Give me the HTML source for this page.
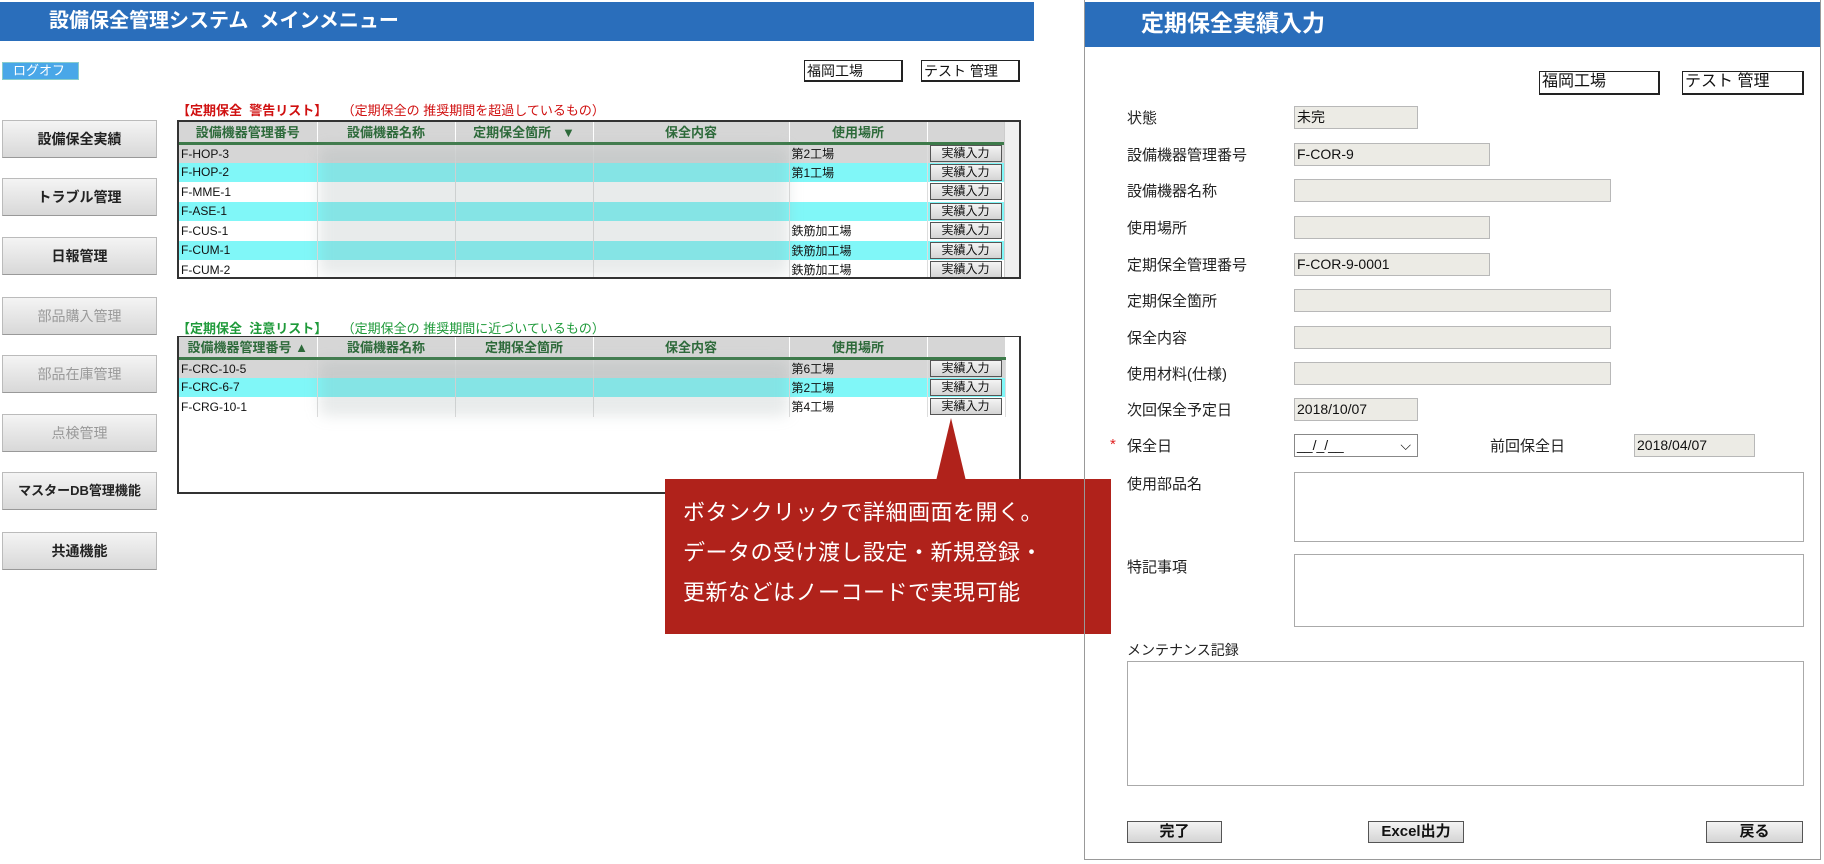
<!DOCTYPE html>
<html><head><meta charset="utf-8"><style>
*{box-sizing:border-box;margin:0;padding:0}
body{width:1824px;height:864px;position:relative;background:#fff;font-family:"Liberation Sans","Noto Sans CJK JP",sans-serif;overflow:hidden;color:#111}
.a{position:absolute}
.hd{background:#2a6ebb;color:#fff;font-weight:bold}
.box{position:absolute;border:1px solid #222;border-right-width:2px;border-bottom-width:2px;background:#fff;font-size:14px;padding-left:2px;line-height:20px}
.lb{position:absolute;width:155px;height:38px;left:2px;background:linear-gradient(#f4f4f4,#d8d8d8);border:1px solid #bbb;border-bottom-color:#999;font-size:14px;text-align:center;line-height:36px;color:#222}
.lb.g{color:#999}
table{border-collapse:collapse;font-size:12px;table-layout:fixed}
td,th{height:19.5px;padding:0 2px;white-space:nowrap;overflow:hidden}
th{background:#d6d6d6;color:#2d6a3a;font-weight:bold;font-size:13px;border-right:1px solid #fff;border-bottom:3px solid #3d7a4a;height:21px}
td{border-right:1px solid #ddd}
.gr td{background:#d6d6d6}.cy td{background:#80f7f8}
.btn{display:inline-block;width:72px;height:17px;border:1px solid #555;background:linear-gradient(#f4f4f4,#d4d4d4);font-size:12px;text-align:center;line-height:15px}
.bl{position:absolute;filter:blur(7px);background:rgba(150,165,165,.22);border-radius:8px}
.lab{position:absolute;left:1127px;font-size:15px;color:#222}
.in{position:absolute;left:1294px;height:23px;background:#ecebe5;border:1px solid #b8b8b8;font-size:14px;line-height:21px;padding-left:2px}
.ta{position:absolute;border:1px solid #aaa;background:#fff}
.fb{position:absolute;top:821px;height:22px;border:1px solid #555;background:linear-gradient(#f4f4f4,#d4d4d4);font-size:15px;text-align:center;line-height:20px;font-weight:bold}
</style></head><body>
<div class="a hd" style="left:0;top:2px;width:1034px;height:39px;font-size:20px;line-height:39px;padding-left:49px">設備保全管理システム&nbsp; メインメニュー</div>
<div class="a" style="left:2px;top:62px;width:77px;height:18px;background:#49a7e8;border:1px solid #8cc;color:#fff;font-size:13px;line-height:16px;padding-left:10px">ログオフ</div>
<div class="box" style="left:804px;top:60px;width:99px;height:22px">福岡工場</div>
<div class="box" style="left:921px;top:60px;width:99px;height:22px">テスト 管理</div>

<div class="lb" style="top:120px;font-weight:bold">設備保全実績</div>
<div class="lb" style="top:178px;font-weight:bold">トラブル管理</div>
<div class="lb" style="top:237px;font-weight:bold">日報管理</div>
<div class="lb g" style="top:297px">部品購入管理</div>
<div class="lb g" style="top:355px">部品在庫管理</div>
<div class="lb g" style="top:414px">点検管理</div>
<div class="lb" style="top:472px;font-weight:bold;font-size:13px">マスターDB管理機能</div>
<div class="lb" style="top:532px;font-weight:bold">共通機能</div>

<div class="a" style="left:177px;top:100px;font-size:13px;color:#d01010"><b>【定期保全&nbsp; 警告リスト】</b>&nbsp;&nbsp;&nbsp; （定期保全の 推奨期間を超過しているもの）</div>
<div class="a" style="left:177px;top:120px;width:844px;height:159px;border:2px solid #333;overflow:hidden">
<table style="width:826px">
<colgroup><col style="width:138px"><col style="width:138px"><col style="width:138px"><col style="width:196px"><col style="width:138px"><col style="width:78px"></colgroup>
<tr><th>設備機器管理番号</th><th>設備機器名称</th><th>定期保全箇所 &nbsp; ▼</th><th>保全内容</th><th>使用場所</th><th></th></tr>
<tr class="gr"><td>F-HOP-3</td><td></td><td></td><td></td><td>第2工場</td><td><span class="btn">実績入力</span></td></tr>
<tr class="cy"><td>F-HOP-2</td><td></td><td></td><td></td><td>第1工場</td><td><span class="btn">実績入力</span></td></tr>
<tr><td>F-MME-1</td><td></td><td></td><td></td><td></td><td><span class="btn">実績入力</span></td></tr>
<tr class="cy"><td>F-ASE-1</td><td></td><td></td><td></td><td></td><td><span class="btn">実績入力</span></td></tr>
<tr><td>F-CUS-1</td><td></td><td></td><td></td><td>鉄筋加工場</td><td><span class="btn">実績入力</span></td></tr>
<tr class="cy"><td>F-CUM-1</td><td></td><td></td><td></td><td>鉄筋加工場</td><td><span class="btn">実績入力</span></td></tr>
<tr><td>F-CUM-2</td><td></td><td></td><td></td><td>鉄筋加工場</td><td><span class="btn">実績入力</span></td></tr>
</table>
<div class="a" style="right:0;top:0;width:15px;height:155px;background:#f0f0f0;border-left:1px solid #ccc"></div>
<div class="bl" style="left:140px;top:25px;width:470px;height:128px"></div>
</div>

<div class="a" style="left:177px;top:318px;font-size:13px;color:#1f9a3a"><b>【定期保全&nbsp; 注意リスト】</b>&nbsp;&nbsp;&nbsp; （定期保全の 推奨期間に近づいているもの）</div>
<div class="a" style="left:177px;top:336px;width:844px;height:158px;border:2px solid #333;border-top-width:1px;overflow:hidden">
<table style="width:826px">
<colgroup><col style="width:138px"><col style="width:138px"><col style="width:138px"><col style="width:196px"><col style="width:138px"><col style="width:78px"></colgroup>
<tr><th>設備機器管理番号 ▲</th><th>設備機器名称</th><th>定期保全箇所</th><th>保全内容</th><th>使用場所</th><th></th></tr>
<tr class="gr"><td>F-CRC-10-5</td><td></td><td></td><td></td><td>第6工場</td><td><span class="btn">実績入力</span></td></tr>
<tr class="cy"><td>F-CRC-6-7</td><td></td><td></td><td></td><td>第2工場</td><td><span class="btn">実績入力</span></td></tr>
<tr><td>F-CRG-10-1</td><td></td><td></td><td></td><td>第4工場</td><td><span class="btn">実績入力</span></td></tr>
</table>
<div class="bl" style="left:140px;top:24px;width:470px;height:55px"></div>
</div>

<svg class="a" style="left:930px;top:418px" width="45" height="64"><polygon points="21,0 6,63 36,63" fill="#b0221b"/></svg>
<div class="a" style="left:665px;top:479px;width:446px;height:155px;background:#b0221b;color:#fff;font-size:22px;line-height:40px;padding:14px 0 0 18px;letter-spacing:0.5px">ボタンクリックで詳細画面を開く。<br>データの受け渡し設定・新規登録・<br>更新などはノーコードで実現可能</div>

<div class="a" style="left:1084px;top:0;width:737px;height:860px;border:1px solid #999;border-top:none"></div>
<div class="a hd" style="left:1085px;top:2px;width:735px;height:45px;font-size:23px;line-height:43px;padding-left:56px">定期保全実績入力</div>
<div class="box" style="left:1539px;top:71px;width:121px;height:24px;font-size:16px">福岡工場</div>
<div class="box" style="left:1682px;top:71px;width:122px;height:24px;font-size:16px">テスト 管理</div>

<div class="lab" style="top:107px">状態</div><div class="in" style="top:106px;width:124px">未完</div>
<div class="lab" style="top:144px">設備機器管理番号</div><div class="in" style="top:143px;width:196px">F-COR-9</div>
<div class="lab" style="top:180px">設備機器名称</div><div class="in" style="top:179px;width:317px"></div>
<div class="lab" style="top:217px">使用場所</div><div class="in" style="top:216px;width:196px"></div>
<div class="lab" style="top:254px">定期保全管理番号</div><div class="in" style="top:253px;width:196px">F-COR-9-0001</div>
<div class="lab" style="top:290px">定期保全箇所</div><div class="in" style="top:289px;width:317px"></div>
<div class="lab" style="top:327px">保全内容</div><div class="in" style="top:326px;width:317px"></div>
<div class="lab" style="top:363px">使用材料(仕様)</div><div class="in" style="top:362px;width:317px"></div>
<div class="lab" style="top:399px">次回保全予定日</div><div class="in" style="top:398px;width:124px">2018/10/07</div>
<div class="a" style="left:1110px;top:436px;color:#e02020;font-size:15px">*</div>
<div class="lab" style="top:435px">保全日</div>
<div class="in" style="top:434px;width:124px;background:#fff;border-color:#888">__/_/__<span style="position:absolute;right:6px;top:0">⌵</span></div>
<div class="a" style="left:1490px;top:435px;font-size:15px;color:#222">前回保全日</div>
<div class="in" style="left:1634px;top:434px;width:121px">2018/04/07</div>
<div class="lab" style="top:473px">使用部品名</div><div class="ta" style="left:1294px;top:472px;width:510px;height:70px"></div>
<div class="lab" style="top:556px">特記事項</div><div class="ta" style="left:1294px;top:554px;width:510px;height:73px"></div>
<div class="lab" style="top:640px;font-size:14px">メンテナンス記録</div><div class="ta" style="left:1127px;top:661px;width:677px;height:125px"></div>
<div class="fb" style="left:1127px;width:95px">完了</div>
<div class="fb" style="left:1368px;width:96px">Excel出力</div>
<div class="fb" style="left:1706px;width:97px">戻る</div>
</body></html>
